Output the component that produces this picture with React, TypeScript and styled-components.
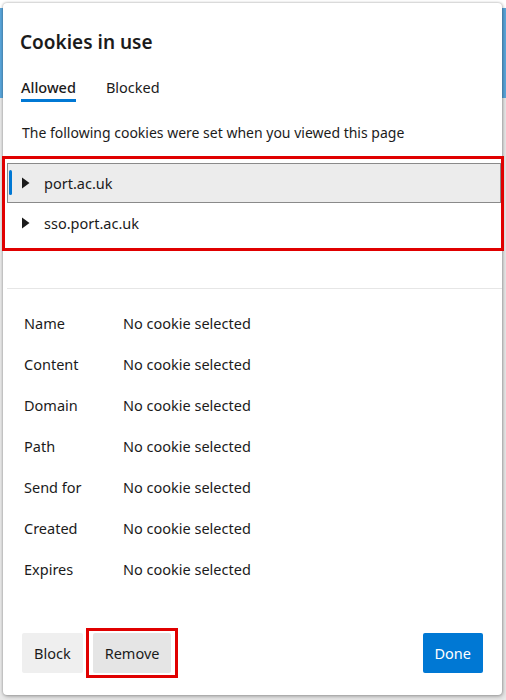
import React from "react";
import styled, { createGlobalStyle } from "styled-components";

const GlobalStyle = createGlobalStyle`
    html, body {
        margin: 0;
        padding: 0;
    }
    body {
        width: 506px;
        height: 700px;
        overflow: hidden;
        font-family: "Noto Sans", "Open Sans", sans-serif;
        background: linear-gradient(to bottom, #ffffff 0, #ffffff 8px, #5aa6dc 8px, #5aa6dc 98px, #e8e8e8 98px);
    }
`;

const SPage = styled.div`
    padding: 3px 4px 5px 3px;
    height: 700px;
    box-sizing: border-box;
`;

const SDialog = styled.div`
    height: 100%;
    box-sizing: border-box;
    background: #fff;
    border-radius: 4px;
    box-shadow: 0 0 3px rgba(0, 0, 0, 0.35), 1px 2px 4px rgba(0, 0, 0, 0.2);
    display: flex;
    flex-direction: column;
    color: #1b1b1b;
`;

const STitle = styled.h1`
    margin: 0;
    padding: 26px 0 0 17px;
    font-size: 19px;
    font-weight: 600;
    line-height: 26px;
`;

const STabs = styled.div`
    display: flex;
    gap: 30px;
    padding: 22px 0 0 18px;
`;

const STab = styled.div<{ $active?: boolean }>`
    font-size: 14.5px;
    line-height: 20px;
    padding-bottom: 2px;
    color: #1b1b1b;
    border-bottom: 3px solid ${(p) => (p.$active ? "#0078d4" : "transparent")};
    font-weight: ${(p) => (p.$active ? 500 : 400)};
`;

const SIntro = styled.p`
    margin: 0;
    padding: 21px 0 0 19px;
    font-size: 14px;
    line-height: 20px;
    color: #1b1b1b;
`;

const SSiteList = styled.div`
    margin: 13px -2px 0 -1px;
    border: 3px solid #e00000;
    padding: 4px 0 5px 2px;
    display: flex;
    flex-direction: column;
`;

const SSiteRow = styled.div<{ $selected?: boolean }>`
    position: relative;
    display: flex;
    align-items: center;
    gap: 14px;
    height: 40px;
    box-sizing: border-box;
    padding-left: 14px;
    font-size: 14.5px;
    color: #1b1b1b;
    background: ${(p) => (p.$selected ? "#ececec" : "transparent")};
    border: 1px solid ${(p) => (p.$selected ? "#8a8a8a" : "transparent")};

    &::before {
        content: "";
        display: ${(p) => (p.$selected ? "block" : "none")};
        position: absolute;
        left: 1px;
        top: 6px;
        width: 3px;
        height: 25px;
        border-radius: 2px;
        background: #0078d4;
    }
`;

const SCaret = styled.svg`
    width: 8px;
    height: 12px;
    flex: none;
`;

const SDivider = styled.hr`
    margin: 37px 0 0 4px;
    border: none;
    border-top: 1px solid #e6e6e6;
`;

const SDetails = styled.div`
    display: grid;
    grid-template-columns: 99px 1fr;
    grid-auto-rows: 41px;
    align-items: center;
    padding: 13px 0 0 21px;
    font-size: 14.5px;
    color: #1b1b1b;
`;

const SFooter = styled.div`
    margin-top: auto;
    display: flex;
    align-items: center;
    padding: 0 19px 22px 19px;
    gap: 3px;
`;

const SButton = styled.button<{ $tone?: "default" | "hover" | "primary" }>`
    height: 40px;
    padding: 0 12px;
    border: none;
    border-radius: 2px;
    font-family: inherit;
    font-size: 14.5px;
    color: ${(p) => (p.$tone === "primary" ? "#fff" : "#1b1b1b")};
    background: ${(p) =>
        p.$tone === "primary" ? "#0078d4" : p.$tone === "hover" ? "#e5e5e5" : "#efefef"};
`;

const SMarked = styled.div`
    border: 3px solid #e00000;
    padding: 2px 4px;
    margin: -5px 0;
    display: flex;
`;

const SSpacer = styled.div`
    flex: 1;
`;

const Caret = () => (
    <SCaret viewBox="0 0 8 12">
        <path d="M0 0.5 L7.5 6 L0 11.5 Z" fill="#1b1b1b" />
    </SCaret>
);

const sites = ["port.ac.uk", "sso.port.ac.uk"];
const fields = ["Name", "Content", "Domain", "Path", "Send for", "Created", "Expires"];

export default function App() {
    return (
        <SPage>
            <GlobalStyle />
            <SDialog>
                <STitle>Cookies in use</STitle>
                <STabs>
                    <STab $active>Allowed</STab>
                    <STab>Blocked</STab>
                </STabs>
                <SIntro>The following cookies were set when you viewed this page</SIntro>
                <SSiteList>
                    {sites.map((site, index) => (
                        <SSiteRow key={site} $selected={index === 0}>
                            <Caret />
                            <span>{site}</span>
                        </SSiteRow>
                    ))}
                </SSiteList>
                <SDivider />
                <SDetails>
                    {fields.map((field) => (
                        <React.Fragment key={field}>
                            <span>{field}</span>
                            <span>No cookie selected</span>
                        </React.Fragment>
                    ))}
                </SDetails>
                <SFooter>
                    <SButton>Block</SButton>
                    <SMarked>
                        <SButton $tone="hover">Remove</SButton>
                    </SMarked>
                    <SSpacer />
                    <SButton $tone="primary">Done</SButton>
                </SFooter>
            </SDialog>
        </SPage>
    );
}
